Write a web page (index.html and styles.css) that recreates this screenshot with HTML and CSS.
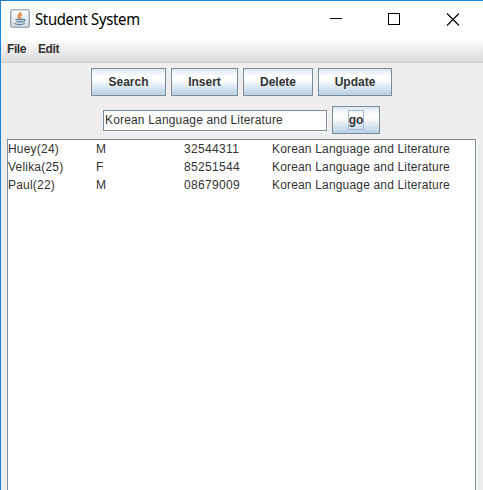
FILE: index.html
```html
<!DOCTYPE html>
<html lang="en">
<head>
<meta charset="utf-8">
<title>Student System</title>
<link rel="stylesheet" href="styles.css">
</head>
<body>
<div class="window">
  <header class="titlebar">
    <svg class="app-icon" width="20" height="19" viewBox="0 0 20 19">
      <defs><linearGradient id="tile" x1="0" y1="0" x2="0" y2="1"><stop offset="0" stop-color="#fdfdfd"/><stop offset="1" stop-color="#d3dbe2"/></linearGradient></defs>
      <rect x=".75" y=".75" width="18.5" height="17.5" rx="1.5" fill="url(#tile)" stroke="#8494a2" stroke-width="1.2"/>
      <path d="M10.5 3C11 5 7.300 5.800 8 7.600Q8.300 8.600 9.400 9.400M12 5.300C9.500 6.500 9.400 7.200 10.400 8.300Q10.800 9 10 9.700" fill="none" stroke="#e98642" stroke-width="1.500"/>
      <path d="M5.500 10.500H13M6.300 12.500Q9.500 13.500 12.500 12.500M4 14.500Q9.500 16.700 15 14.500M13 10.500Q16 10 14.500 12L12.700 12.900" fill="none" stroke="#65849f" stroke-width="1.300"/>
    </svg>
    <h1 class="title">Student System</h1>
    <svg class="controls" width="130" height="14" viewBox="0 0 130 14" fill="none" stroke="#000">
      <path d="M0 5.500H12M58.500 .5H69.500V11.500H58.500Z" shape-rendering="crispEdges"/>
      <path d="M117 .5L129 12.500M129 .5L117 12.500" stroke-width="1.100"/>
    </svg>
  </header>
  <nav class="menubar"><span class="file">File</span><span class="edit">Edit</span></nav>
  <main class="content">
    <div class="actions">
      <button class="button search">Search</button>
      <button class="button insert">Insert</button>
      <button class="button delete">Delete</button>
      <button class="button update">Update</button>
    </div>
    <div class="query">
      <div class="field"><span class="department">Korean Language and Literature</span></div>
      <button class="button go"><span class="focus">go</span></button>
    </div>
    <div class="results">
      <div class="row"><span class="name">Huey(24)</span><span>M</span><span class="number">32544311</span><span class="department">Korean Language and Literature</span></div>
      <div class="row"><span class="name">Velika(25)</span><span>F</span><span class="number">85251544</span><span class="department">Korean Language and Literature</span></div>
      <div class="row"><span class="name">Paul(22)</span><span>M</span><span class="number">08679009</span><span class="department">Korean Language and Literature</span></div>
    </div>
  </main>
</div>
</body>
</html>
```
FILE: styles.css
```css
* { box-sizing: border-box; }
body { margin: 0; overflow: hidden; color: #333; font: 12px/18px "Liberation Sans", sans-serif; }
.window { height: 490px; display: flex; flex-direction: column; border: solid #1883d7; border-width: 1px 0 0 1px; background: #eee; }
.titlebar { height: 37px; display: flex; align-items: flex-start; background: #fff; }
.app-icon { margin: 8px 0 0 9px; }
.title { width: 110px; margin: 8px 0 0 5px; color: #000; font: 16px/20px "Noto Sans", sans-serif; letter-spacing: -.35px; white-space: nowrap; transform: scaleX(.93); transform-origin: left; }
.controls { margin: 12px 0 0 185px; }
.menubar { height: 25px; display: flex; padding: 2px 6px; border-bottom: 1px solid #ccc; background: linear-gradient(#fff, #dadada); font-weight: bold; letter-spacing: -.4px; }
.file { width: 31px; }
.content { flex: 1; display: flex; flex-direction: column; padding: 5px 7px 0 6px; }
.actions { display: flex; gap: 5px; padding-left: 84px; }
.button { height: 28px; padding: 0; border: 1px solid #7a8a99; background: linear-gradient(#dde8f3 0%, #fff 30%, #fff 40%, #b8cfe5 100%); color: #333; font: bold 12px/18px "Liberation Sans", sans-serif; }
.search { width: 75px; }
.insert { width: 67px; }
.delete { width: 70px; }
.update { width: 74px; }
.query { display: flex; align-items: center; gap: 5px; margin-top: 10px; padding-left: 96px; }
.field { width: 224px; height: 21px; padding: 0 1px; border: 1px solid #7a8a99; background: #fff; box-shadow: 1px 1px #fff; line-height: 18px; }
.go { width: 48px; }
.focus { display: inline-block; height: 20px; border: 1px solid #a3b8cc; }
.results { flex: 1; margin-top: 5px; border: solid #7a8a99; border-width: 1px 1px 0; background: #fff; box-shadow: 1px 0 #fff; }
.row { display: grid; grid-template-columns: 88px 88px 88px 1fr; height: 18px; white-space: nowrap; }
.department { letter-spacing: .17px; }
.number { letter-spacing: .33px; }
.name { letter-spacing: .2px; }
```
